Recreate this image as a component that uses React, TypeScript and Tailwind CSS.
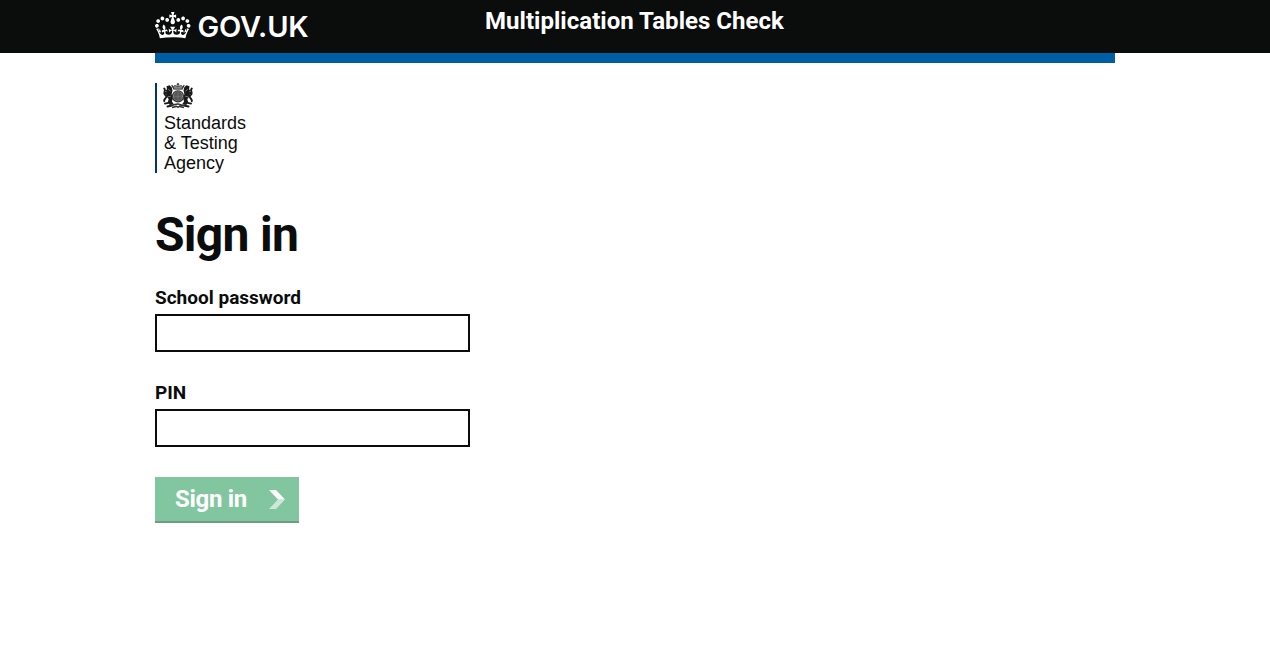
import React from "react";

function Crown() {
  return (
    <svg className="block h-[26.5px] w-[35.5px] shrink-0" viewBox="0 0 132 97" preserveAspectRatio="none" fill="#fff" aria-hidden="true">
      <path d="M25 30.2c3.5 1.5 7.7-.2 9.1-3.7 1.5-3.6-.2-7.8-3.9-9.2-3.6-1.4-7.6.3-9.1 3.9-1.4 3.5.3 7.5 3.9 9zM9 39.5c3.6 1.5 7.8-.2 9.2-3.7 1.5-3.6-.2-7.8-3.9-9.1-3.6-1.5-7.6.2-9.1 3.8-1.4 3.5.3 7.5 3.8 9zM4.4 57.2c3.5 1.5 7.7-.2 9.1-3.8 1.5-3.6-.2-7.7-3.9-9.1-3.5-1.5-7.6.3-9.1 3.8-1.4 3.5.3 7.6 3.9 9.1zm38.3-21.4c3.5 1.5 7.7-.2 9.1-3.8 1.5-3.6-.2-7.7-3.9-9.1-3.6-1.5-7.6.3-9.1 3.8-1.3 3.6.4 7.7 3.9 9.1zm64.4-5.6c-3.6 1.5-7.8-.2-9.1-3.7-1.5-3.6.2-7.8 3.8-9.2 3.6-1.4 7.7.3 9.2 3.9 1.3 3.5-.4 7.5-3.9 9zm15.9 9.3c-3.6 1.5-7.7-.2-9.1-3.7-1.5-3.6.2-7.8 3.7-9.1 3.6-1.5 7.7.2 9.2 3.8 1.5 3.5-.3 7.5-3.8 9zm4.7 17.7c-3.6 1.5-7.8-.2-9.2-3.8-1.5-3.6.2-7.7 3.9-9.1 3.6-1.5 7.7.3 9.2 3.8 1.3 3.5-.4 7.6-3.9 9.1zM89.3 35.8c-3.6 1.5-7.8-.2-9.2-3.8-1.4-3.6.2-7.7 3.9-9.1 3.6-1.5 7.7.3 9.2 3.8 1.4 3.6-.3 7.7-3.9 9.1zM69.7 17.7l8.9 4.7V9.3l-8.9 2.8c-.2-.3-.5-.6-.9-.9L72.4 0H59.6l3.5 11.2c-.3.3-.6.5-.9.9l-8.8-2.8v13.1l8.8-4.7c.3.3.6.7.9.9l-5 15.4v.1c-.2.8-.4 1.6-.4 2.4 0 4.1 3.1 7.5 7 8.1h.2c.3 0 .7.1 1 .1.4 0 .7 0 1-.1h.2c4-.6 7.1-4.1 7.1-8.1 0-.8-.1-1.7-.4-2.4V34l-5.1-15.4c.4-.2.7-.6 1-.9zM66 92.8c16.9 0 32.8 1.1 47.1 3.2 4-16.9 8.9-26.7 14-33.5l-9.6-3.4c1 4.9 1.1 7.2 0 10.2-1.5-1.4-3-4.3-4.2-8.7L108.6 76c2.8-2 5-3.2 7.5-3.3-4.4 9.4-10 11.9-13.6 11.2-4.3-.8-6.3-4.6-5.6-7.9 1-4.7 5.7-5.9 8-.5 4.3-8.7-3-11.4-7.6-8.8 7.1-7.2 7.9-13.5 2.1-21.1-8 6.1-8.1 12.3-4.5 20.8-4.7-5.4-12.1-2.5-9.5 6.2 3.4-5.2 7.9-2 7.2 3.1-.6 4.3-6.4 7.8-13.5 7.2-10.3-.9-10.9-8-11.2-13.8 2.5-.5 7.1 1.8 11 7.3L80.2 60c-4.1 4.4-8 5.3-12.3 5.4 1.4-4.4 8-11.6 8-11.6H55.5s6.4 7.2 7.9 11.6c-4.2-.1-8-1-12.3-5.4l1.4 16.4c3.9-5.5 8.5-7.7 10.9-7.3-.3 5.8-.9 12.8-11.1 13.8-7.2.6-12.9-2.9-13.5-7.2-.7-5 3.8-8.3 7.1-3.1 2.7-8.7-4.6-11.6-9.4-6.2 3.7-8.5 3.6-14.7-4.6-20.8-5.8 7.6-5 13.9 2.2 21.1-4.7-2.6-11.9.1-7.7 8.8 2.3-5.5 7.1-4.2 8.1.5.7 3.3-1.3 7.1-5.7 7.9-3.5.7-9-1.8-13.5-11.2 2.5.1 4.7 1.3 7.5 3.3l-4.7-15.4c-1.2 4.4-2.7 7.2-4.3 8.7-1.1-3-.9-5.3 0-10.2l-9.5 3.4c5 6.9 9.9 16.7 14 33.5 14.8-2.1 30.8-3.2 47.7-3.2z" />
    </svg>
  );
}

function Supporter() {
  return (
    <g strokeLinecap="round" strokeLinejoin="round">
      <path d="M3.5 3.2 6.5 2.2l2.2 2 .8 3.3L8.6 11l1.3 4.5-1 3 1.8 2.5-3.5.7-2.5-2.2 1-3.2L3 12.5l.8-3.5-2-1.5 2.2-1z" fill="#1a1a1a" />
      <path d="M1.2 5.5C3 7 .8 9 1.5 11s2.3 1 1.7 3-2.4 2-2 4.2M1.8 9.8l4.5 1M2 20.6l4.5-1M4.5 23.5l4.5-1" fill="none" stroke="#1a1a1a" strokeWidth="1.9" />
      <path d="M9 2.5 11 6" fill="none" stroke="#333" strokeWidth="1.4" />
      <path d="M5.5 6.5 7.3 8M5 13.8l2.5-.5" fill="none" stroke="#999" strokeWidth=".7" />
    </g>
  );
}

function RoyalArms() {
  return (
    <svg className="block h-[26px] w-[30px]" viewBox="0 0 30 26" aria-hidden="true">
      <Supporter />
      <g transform="translate(30 0) scale(-1 1)"><Supporter /></g>
      <path d="M11.5 6.2c-2-2.2-.7-4 1.2-3.6L15 3.8l2.3-1.2c1.9-.4 3.2 1.4 1.2 3.6z" fill="#888" stroke="#333" strokeWidth=".8" />
      <path d="M15 0v3M13.7 1.2h2.6" stroke="#222" strokeWidth="1" />
      <circle cx="15" cy="13.3" r="5.5" fill="#aaa" stroke="#333" strokeWidth="1.3" />
      <ellipse cx="15" cy="13.3" rx="3.8" ry="4.2" fill="#555" stroke="#444" strokeWidth=".6" />
      <path d="M15 9.3v8M11.4 13.3h7.2" stroke="#888" strokeWidth=".5" />
      <path d="M6.5 21c3.5 2.8 5.5-.5 8.5 0s5 2.8 8.5 0M9 24.4l4.3-1 1.7.8 1.7-.8 4.3 1" fill="none" stroke="#333" strokeWidth="1.5" />
    </svg>
  );
}

function Field({ id, label, type }: { id: string; label: string; type: string }) {
  return (
    <div className="mb-[30px] flex w-[315px] flex-col">
      <label htmlFor={id} className="mb-[5px] h-[22px] text-[19px] leading-[21px] font-bold whitespace-nowrap">{label}</label>
      <input id={id} type={type} className="h-[38px] w-full rounded-none border-2 border-[#0b0c0c] bg-white px-1 outline-none" />
    </div>
  );
}

export default function App() {
  return (
    <div className="min-h-[654px] bg-white font-[Roboto,sans-serif] text-[#0b0c0c]">
      <header className="h-[53px] bg-[#0b0c0c] text-white">
        <div className="mx-auto flex w-[960px]">
          <a href="#" className="flex w-[330px] gap-[7px] pt-3">
            <Crown />
            <span className="h-[30px] font-[Inter,sans-serif] text-[29px] leading-[30px] font-semibold tracking-[-0.2px]">GOV.UK</span>
          </a>
          <span className="pt-[6px] text-[24px] leading-[30px] font-bold tracking-[0.03px] whitespace-nowrap">Multiplication Tables Check</span>
        </div>
      </header>
      <main className="mx-auto flex w-[960px] flex-col items-start">
        <div className="mb-5 h-[10px] w-full bg-[#005ea5]" />
        <div className="h-[90px] border-l-2 border-[#003764] pl-[6px] font-['Liberation_Sans',sans-serif]">
          <RoyalArms />
          <div className="pt-[4px] pl-px text-[18px] leading-5 text-[#0b0c0c]">
            Standards<br />&amp; Testing<br />Agency
          </div>
        </div>
        <h1 className="mt-[37px] mb-[27px] h-[50px] text-[48px] leading-[50px] font-bold tracking-[-0.7px] whitespace-nowrap">Sign in</h1>
        <Field id="password" label="School password" type="text" />
        <Field id="pin" label="PIN" type="text" />
        <button className="flex h-[46px] w-36 items-center justify-between border-b-2 border-[#6f9d82] bg-[#82c69f] pr-[14px] pl-5 text-[24px] leading-[30px] font-bold tracking-[-0.3px] whitespace-nowrap text-white">
          <span>Sign in</span>
          <svg className="h-[19px] w-4" viewBox="0 0 16 19" aria-hidden="true">
            <path d="M0 0h7l9 9.5H9z" fill="#fff" />
            <path d="M9 9.5h7L7 19H0z" fill="#fff" fillOpacity=".6" />
          </svg>
        </button>
      </main>
    </div>
  );
}
